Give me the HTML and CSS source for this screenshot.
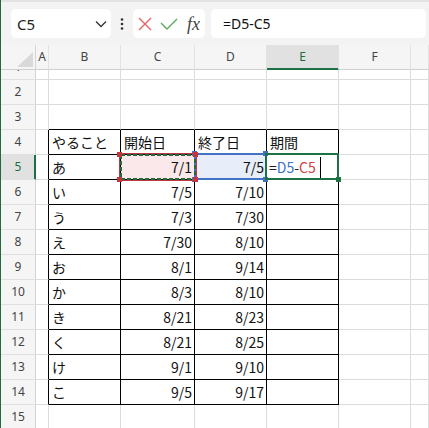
FILE: index.html
```html
<!DOCTYPE html>
<html lang="ja">
<head>
<meta charset="utf-8">
<title>Sheet</title>
<link rel="stylesheet" href="styles.css">
</head>
<body>
<div class="toolbar">
  <div class="namebox"><span>C5</span><svg class="chev" width="12" height="8" viewBox="0 0 12 8"><path d="M1 1.5 L6 6.5 L11 1.5" fill="none" stroke="#333" stroke-width="1.3"/></svg></div>
  <div class="more"><svg width="4" height="14" viewBox="0 0 4 14"><circle cx="2" cy="2.5" r="1.3" fill="#333"/><circle cx="2" cy="7" r="1.3" fill="#333"/><circle cx="2" cy="11.5" r="1.3" fill="#333"/></svg></div>
  <div class="fbtns">
    <svg class="xicon" width="14" height="14" viewBox="0 0 14 14"><path d="M1 1 L13 13 M13 1 L1 13" stroke="#e06464" stroke-width="1.4" fill="none"/></svg>
    <svg class="vicon" width="18" height="12" viewBox="0 0 18 12"><path d="M1 5 L7 11 L17 1" stroke="#5aab5e" stroke-width="1.4" fill="none"/></svg>
    <span class="fx">fx</span>
  </div>
  <div class="formula">=D5-C5</div>
</div>

<div class="sheet">
  <div class="corner"><svg width="16" height="15" viewBox="0 0 16 15"><path d="M16 0 L16 15 L0 15 Z" fill="#d9d9d9"/></svg></div>
  <div class="h">A</div><div class="h">B</div><div class="h">C</div><div class="h">D</div><div class="h sel">E</div><div class="h">F</div><div class="h"></div>

  <div class="rh r1">1</div><div class="c r1"></div><div class="c r1"></div><div class="c r1"></div><div class="c r1"></div><div class="c r1"></div><div class="c r1"></div><div class="c r1"></div>

  <div class="rh">2</div><div class="c"></div><div class="c"></div><div class="c"></div><div class="c"></div><div class="c"></div><div class="c"></div><div class="c"></div>

  <div class="rh">3</div><div class="c"></div><div class="c above"></div><div class="c above"></div><div class="c above"></div><div class="c above"></div><div class="c"></div><div class="c"></div>

  <div class="rh">4</div><div class="c left"></div><div class="c t">やること</div><div class="c t">開始日</div><div class="c t">終了日</div><div class="c t">期間</div><div class="c"></div><div class="c"></div>

  <div class="rh sel">5</div><div class="c left"></div><div class="c t">あ</div>
  <div class="c t n ref-red">7/1<svg class="ov ov-red" width="84" height="32" viewBox="0 0 84 32"><rect x="3.5" y="2.5" width="77" height="27" fill="none" stroke="#c4363e" stroke-width="1"/><rect x="5" y="4" width="74" height="24" fill="none" stroke="#1e6b3c" stroke-width="2" stroke-dasharray="4 2"/><rect x="1" y="1" width="5" height="5" fill="#c4363e"/><rect x="77" y="1" width="5" height="5" fill="#c4363e"/><rect x="1" y="26" width="5" height="5" fill="#c4363e"/><rect x="77" y="26" width="5" height="5" fill="#c4363e"/></svg></div>
  <div class="c t n ref-blue">7/5<svg class="ov ov-blue" width="82" height="34" viewBox="0 0 82 34"><rect x="5" y="4" width="71" height="25" fill="none" stroke="#4172c4" stroke-width="2"/><rect x="2" y="1" width="5" height="5" fill="#4172c4"/><rect x="73" y="1" width="5" height="5" fill="#4172c4"/><rect x="2" y="27" width="5" height="5" fill="#4172c4"/><rect x="73" y="27" width="5" height="5" fill="#4172c4"/></svg></div>
  <div class="c t active"><span class="k">=</span><span class="rb">D5</span><span class="k">-</span><span class="rr">C5</span><span class="caret"></span><svg class="ov ov-green" width="84" height="36" viewBox="0 0 84 36"><rect x="4" y="4" width="72" height="25" fill="none" stroke="#1e7145" stroke-width="2"/><rect x="74" y="27" width="5" height="5" fill="#1e7145"/></svg></div>
  <div class="c"></div><div class="c"></div>

  <div class="rh">6</div><div class="c left"></div><div class="c t">い</div><div class="c t n">7/5</div><div class="c t n">7/10</div><div class="c t"></div><div class="c"></div><div class="c"></div>
  <div class="rh">7</div><div class="c left"></div><div class="c t">う</div><div class="c t n">7/3</div><div class="c t n">7/30</div><div class="c t"></div><div class="c"></div><div class="c"></div>
  <div class="rh">8</div><div class="c left"></div><div class="c t">え</div><div class="c t n">7/30</div><div class="c t n">8/10</div><div class="c t"></div><div class="c"></div><div class="c"></div>
  <div class="rh">9</div><div class="c left"></div><div class="c t">お</div><div class="c t n">8/1</div><div class="c t n">9/14</div><div class="c t"></div><div class="c"></div><div class="c"></div>
  <div class="rh">10</div><div class="c left"></div><div class="c t">か</div><div class="c t n">8/3</div><div class="c t n">8/10</div><div class="c t"></div><div class="c"></div><div class="c"></div>
  <div class="rh">11</div><div class="c left"></div><div class="c t">き</div><div class="c t n">8/21</div><div class="c t n">8/23</div><div class="c t"></div><div class="c"></div><div class="c"></div>
  <div class="rh">12</div><div class="c left"></div><div class="c t">く</div><div class="c t n">8/21</div><div class="c t n">8/25</div><div class="c t"></div><div class="c"></div><div class="c"></div>
  <div class="rh">13</div><div class="c left"></div><div class="c t">け</div><div class="c t n">9/1</div><div class="c t n">9/10</div><div class="c t"></div><div class="c"></div><div class="c"></div>
  <div class="rh">14</div><div class="c left"></div><div class="c t">こ</div><div class="c t n">9/5</div><div class="c t n">9/17</div><div class="c t"></div><div class="c"></div><div class="c"></div>

  <div class="rh">15</div><div class="c"></div><div class="c"></div><div class="c"></div><div class="c"></div><div class="c"></div><div class="c"></div><div class="c"></div>
</div>
</body>
</html>
```

FILE: styles.css
```css
html, body {
  margin: 0;
  padding: 0;
}
body {
  border-left: 1px solid #1d6b3f;
  height: 428px;
  overflow: hidden;
  background: #ffffff;
  font-family: "Noto Sans", "Liberation Sans", sans-serif;
}

/* ---------- toolbar ---------- */
.toolbar {
  height: 45px;
  box-sizing: border-box;
  border-top: 2px solid #e2e2e2;
  background: #f3f3f3;
  display: flex;
  align-items: center;
  padding-left: 10px;
}
.namebox {
  width: 100px;
  height: 29px;
  box-sizing: border-box;
  background: #fff;
  border-radius: 5px;
  display: flex;
  align-items: center;
  justify-content: space-between;
  padding: 0 4px 0 6px;
  font-size: 15px;
  color: #222;
}
.more {
  width: 22px;
  display: flex;
  justify-content: center;
}
.fbtns {
  width: 72px;
  height: 29px;
  box-sizing: border-box;
  background: #fff;
  border-radius: 5px;
  display: flex;
  align-items: center;
  padding-left: 5px;
}
.xicon { margin-right: 8px; }
.vicon { margin-right: 9px; }
.fx {
  font-family: "Liberation Serif", "DejaVu Serif", serif;
  font-style: italic;
  font-size: 18px;
  color: #444;
  line-height: 1;
}
.formula {
  flex: 1;
  height: 29px;
  margin-left: 6px;
  margin-right: 3px;
  background: #fff;
  border-radius: 5px;
  display: flex;
  align-items: center;
  padding-left: 12px;
  font-size: 14px;
  color: #111;
}

/* ---------- sheet ---------- */
.sheet {
  display: grid;
  grid-template-columns: 35px 13px 72px 74px 72px 72px 72px 1fr;
  grid-template-rows: 25px 10px repeat(14, 25px);
}
.corner, .h, .rh, .c {
  box-sizing: border-box;
  overflow: hidden;
  white-space: nowrap;
}
.corner {
  background: #f5f5f5;
  border-right: 1px solid #d4d4d4;
  border-bottom: 1px solid #cfcfcf;
  display: flex;
  justify-content: flex-end;
  align-items: flex-end;
  padding: 0 2px 2px 0;
}
.h {
  background: #f5f5f5;
  border-right: 1px solid #e2e2e2;
  border-bottom: 1px solid #cfcfcf;
  display: flex;
  align-items: center;
  justify-content: center;
  font-size: 12px;
  color: #444;
  padding-bottom: 2px;
}
.h.sel {
  background: #e1e1e1;
  color: #1e6b3f;
  border-bottom-color: #1e7145;
  box-shadow: inset 0 -1px 0 #1e7145;
}
.rh {
  background: #f5f5f5;
  border-right: 1px solid #d4d4d4;
  border-bottom: 1px solid #e0e0e0;
  display: flex;
  align-items: center;
  justify-content: center;
  font-size: 12px;
  color: #444;
  line-height: 24px;
}
.rh.sel {
  background: #e1e1e1;
  color: #1e6b3f;
  border-right-color: #1e7145;
  box-shadow: inset -1px 0 0 #1e7145;
}
.r1 {
  align-items: flex-end;
}
.c {
  border-right: 1px solid #dcdcdc;
  border-bottom: 1px solid #dcdcdc;
  display: flex;
  align-items: center;
  padding: 1px 2px 0 3px;
  font-family: "Noto Sans CJK JP", "Noto Sans", sans-serif;
  font-size: 14px;
  line-height: 23px;
  color: #111;
}
.c.above { border-bottom-color: #000; }
.c.left { border-right-color: #000; }
.c.t {
  border-right-color: #000;
  border-bottom-color: #000;
}
.c.n { justify-content: flex-end; }

/* ---------- references / active cell ---------- */
.ref-red {
  background: #fbe8ea;
  position: relative;
  overflow: visible;
}
.ref-blue {
  background: #e7eef9;
  position: relative;
  overflow: visible;
}
.active {
  position: relative;
  overflow: visible;
  padding-left: 2px;
}
.ov { position: absolute; }
.ov-red { left: -5px; top: -4px; z-index: 3; }
.ov-blue { left: -5px; top: -5px; z-index: 2; }
.ov-green { left: -5px; top: -5px; z-index: 4; }
.k { color: #222; }
.rb { color: #3d72cc; }
.rr { color: #cf3f45; }
.caret {
  display: inline-block;
  width: 1px;
  height: 21px;
  background: #000;
  margin-left: 4px;
}
```
